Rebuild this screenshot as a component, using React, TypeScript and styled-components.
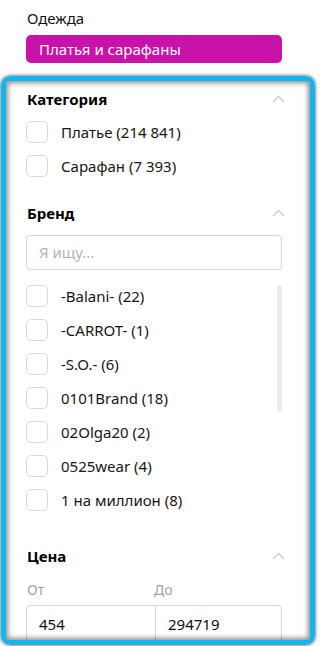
import React from "react";
import styled, { createGlobalStyle } from "styled-components";

const Global = createGlobalStyle`
  html, body { margin: 0; padding: 0; background: #fff; }
  body { font-family: "Noto Sans", "Open Sans", sans-serif; color: #1a1a1a; width: 320px; height: 646px; overflow: hidden; }
  * { box-sizing: border-box; }
`;

const Page = styled.div`
  position: relative;
  width: 320px;
  height: 646px;
  padding: 8px 38px 0 26px;
  overflow: hidden;
`;

const Crumb = styled.div`
  font-size: 15px;
  line-height: 20px;
  padding-left: 1px;
  color: #111;
`;

const Chip = styled.div`
  margin-top: 7px;
  height: 28px;
  border-radius: 5px;
  background: #c812a9;
  color: #fff;
  font-size: 15px;
  line-height: 28px;
  padding-left: 13px;
`;

const Panel = styled.div`
  margin-top: 26px;
  display: flex;
  flex-direction: column;
`;

const Section = styled.section<{ $gap: number }>`
  display: flex;
  flex-direction: column;
  margin-bottom: ${(p) => p.$gap}px;
`;

const Header = styled.div`
  display: flex;
  justify-content: space-between;
  align-items: center;
  height: 20px;
  padding-left: 1px;
`;

const Title = styled.h3`
  margin: 0;
  font-size: 15px;
  font-weight: 700;
  color: #000;
`;

const Chevron = () => (
  <svg width="13" height="8" viewBox="0 0 13 8" style={{ marginRight: -3 }}>
    <path d="M1 7 L6.5 1.5 L12 7" fill="none" stroke="#cfcfcf" strokeWidth="1.5" />
  </svg>
);

const Rows = styled.div<{ $top: number }>`
  display: flex;
  flex-direction: column;
  gap: 12px;
  margin-top: ${(p) => p.$top}px;
`;

const Row = styled.label`
  display: flex;
  align-items: center;
  height: 22px;
  gap: 13px;
  font-size: 15px;
  color: #161616;
`;

const Box = styled.span`
  width: 22px;
  height: 22px;
  border: 1px solid #d9d9d9;
  border-radius: 5px;
  background: #fff;
  flex: none;
`;

const Search = styled.div`
  margin-top: 12px;
  height: 35px;
  border: 1px solid #d6d6d6;
  border-radius: 4px;
  font-size: 15px;
  line-height: 33px;
  padding-left: 12px;
  color: #b3b3b3;
`;

const ListWrap = styled.div`
  position: relative;
  height: 241px;
`;

const Thumb = styled.div`
  position: absolute;
  right: 0;
  width: 5px;
  height: 127px;
  border-radius: 3px;
  background: #ececec;
`;

const Labels = styled.div`
  display: grid;
  grid-template-columns: 127px 1fr;
  margin-top: 15px;
  font-size: 14px;
  line-height: 18px;
  color: #a3a3a3;
  padding-left: 1px;
`;

const PriceInputs = styled.div`
  margin-top: 6px;
  height: 38px;
  display: grid;
  grid-template-columns: 128px 1fr;
  border: 1px solid #d6d6d6;
  border-radius: 4px;
`;

const PriceCell = styled.div<{ $divider?: boolean }>`
  font-size: 15px;
  line-height: 36px;
  padding-left: 12px;
  color: #111;
  border-left: ${(p) => (p.$divider ? "1px solid #d6d6d6" : "none")};
`;

const Frame = styled.div`
  position: absolute;
  left: 1px;
  top: 76px;
  width: 314px;
  height: 569px;
  border: 5px solid #12b6ec;
  border-radius: 9px;
  box-shadow: 0 0 3px 1px rgba(0, 0, 0, 0.45), inset 0 0 5px 2px rgba(0, 0, 0, 0.45);
  pointer-events: none;
`;

const brands = [
  "-Balani- (22)",
  "-CARROT- (1)",
  "-S.O.- (6)",
  "0101Brand (18)",
  "02Olga20 (2)",
  "0525wear (4)",
  "1 на миллион (8)",
];

export default function App() {
  return (
    <Page>
      <Global />
      <Crumb>Одежда</Crumb>
      <Chip>Платья и сарафаны</Chip>
      <Panel>
        <Section $gap={26}>
          <Header>
            <Title>Категория</Title>
            <Chevron />
          </Header>
          <Rows $top={12}>
            <Row><Box />Платье (214 841)</Row>
            <Row><Box />Сарафан (7 393)</Row>
          </Rows>
        </Section>
        <Section $gap={35}>
          <Header>
            <Title>Бренд</Title>
            <Chevron />
          </Header>
          <Search>Я ищу...</Search>
          <ListWrap>
            <Rows $top={15}>
              {brands.map((b) => (
                <Row key={b}><Box />{b}</Row>
              ))}
            </Rows>
            <Thumb style={{ top: 15 }} />
          </ListWrap>
        </Section>
        <Section $gap={0}>
          <Header>
            <Title>Цена</Title>
            <Chevron />
          </Header>
          <Labels>
            <span>От</span>
            <span>До</span>
          </Labels>
          <PriceInputs>
            <PriceCell>454</PriceCell>
            <PriceCell $divider>294719</PriceCell>
          </PriceInputs>
        </Section>
      </Panel>
      <Frame />
    </Page>
  );
}
